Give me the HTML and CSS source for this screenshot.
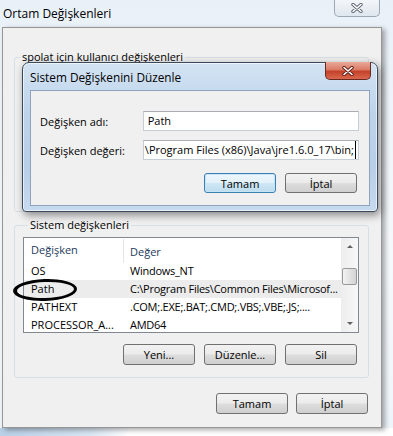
FILE: index.html
```html
<!DOCTYPE html>
<html lang="tr">
<head>
  <meta charset="UTF-8" />
  <title>Ortam Değişkenleri</title>
  <link rel="stylesheet" href="styles.css">
</head>
<body>
  <div class="window">
    <div class="titlebar">
      <span class="title">Ortam Değişkenleri</span>
      <div class="close-outer">
        <svg width="12" height="10" viewBox="0 0 12 10"><path d="M2 1.5 L10 8.5 M10 1.5 L2 8.5" stroke="#5d6672" stroke-width="3.4" stroke-linecap="round"/><path d="M2 1.5 L10 8.5 M10 1.5 L2 8.5" stroke="#fff" stroke-width="1.6" stroke-linecap="round"/></svg>
      </div>
    </div>

    <div class="client">
      <fieldset class="group group-user">
        <legend>spolat için kullanıcı değişkenleri</legend>
      </fieldset>

      <fieldset class="group group-system">
        <legend>Sistem değişkenleri</legend>
        <div class="listview">
          <div class="lv-table">
            <div class="lv-header">
              <span class="col-name">Değişken</span>
              <span class="col-value">Değer</span>
            </div>
            <div class="lv-row"><span class="col-name">OS</span><span class="col-value">Windows_NT</span></div>
            <div class="lv-row selected"><span class="col-name">Path</span><span class="col-value">C:\Program Files\Common Files\Microsof...</span></div>
            <div class="lv-row"><span class="col-name">PATHEXT</span><span class="col-value">.COM;.EXE;.BAT;.CMD;.VBS;.VBE;.JS;....</span></div>
            <div class="lv-row"><span class="col-name">PROCESSOR_A...</span><span class="col-value">AMD64</span></div>
          </div>
          <div class="scrollbar">
            <div class="sb-btn"><span class="arrow-up"></span></div>
            <div class="sb-track"><div class="sb-thumb"></div></div>
            <div class="sb-btn"><span class="arrow-down"></span></div>
          </div>
        </div>
        <div class="btn-row group-buttons">
          <button class="btn">Yeni...</button>
          <button class="btn">Düzenle...</button>
          <button class="btn">Sil</button>
        </div>
      </fieldset>

      <div class="btn-row window-buttons">
        <button class="btn">Tamam</button>
        <button class="btn">İptal</button>
      </div>
    </div>
  </div>

  <!-- edit dialog on top of the main window -->
  <div class="dialog">
    <div class="dialog-title">Sistem Değişkenini Düzenle</div>
    <div class="close-red">
      <svg width="12" height="10" viewBox="0 0 12 10"><path d="M2 1.5 L10 8.5 M10 1.5 L2 8.5" stroke="#5a1d14" stroke-width="3.4" stroke-linecap="round"/><path d="M2 1.5 L10 8.5 M10 1.5 L2 8.5" stroke="#fff" stroke-width="1.6" stroke-linecap="round"/></svg>
    </div>
    <div class="dialog-client">
      <div class="field">
        <label>Değişken adı:</label>
        <div class="input">Path</div>
      </div>
      <div class="field">
        <label>Değişken değeri:</label>
        <div class="input scrolled"><span class="caret">\Program Files (x86)\Java\jre1.6.0_17\bin;</span></div>
      </div>
      <div class="btn-row dialog-buttons">
        <button class="btn default">Tamam</button>
        <button class="btn">İptal</button>
      </div>
    </div>
  </div>

  <div class="mark"></div>
</body>
</html>
```

FILE: styles.css
```css
body {
  margin: 0;
  width: 393px;
  height: 436px;
  overflow: hidden;
  position: relative;
  font-family: "Open Sans", sans-serif;
  font-size: 11px;
  color: #000;
  background:
    linear-gradient(90deg, #b9cfe6 0px, #d8e6f3 90px, #fff 130px) bottom / 100% 8px no-repeat,
    linear-gradient(180deg, #e9f1f8, #f6f9fc 60%, #eef5fa);
}

.window { display: flex; flex-direction: column; }
.titlebar {
  height: 27px;
  display: flex;
  justify-content: space-between;
  align-items: flex-start;
}
.title { padding: 6px 0 0 3px; font-size: 12px; line-height: 16px; }
.close-outer {
  width: 46px; height: 17px;
  margin-right: 13px;
  box-sizing: border-box;
  border: 1px solid #9ca7b4;
  border-top: 0;
  border-radius: 0 0 5px 5px;
  background: linear-gradient(#f3f6f9, #dfe6ee);
  display: flex;
  align-items: center;
  justify-content: center;
}

.client {
  margin-left: 2px;
  width: 380px; height: 401px;
  box-sizing: border-box;
  border: 1px solid #969696;
  background: #f0f0f0;
  box-shadow: 3px 2px 5px rgba(0,0,0,0.35);
  display: flex;
  flex-direction: column;
}

.group {
  margin: 0 12px 0 11px;
  padding: 0;
  min-width: 0;
  box-sizing: border-box;
  border: 1px solid #d5dfe5;
  border-radius: 3px;
}
.group legend { margin-left: 5px; padding: 0 2px; line-height: 14px; }
.group-user { margin-top: 22px; height: 162px; }
.group-system { margin-top: 6px; height: 160px; padding: 5px 9px 0 8px; }

.listview {
  height: 96px;
  box-sizing: border-box;
  border: 1px solid #828790;
  background: #fff;
  display: flex;
}
.lv-table { flex: 1; min-width: 0; overflow: hidden; }
.lv-header { height: 24px; display: flex; align-items: center; padding-top: 2px; box-sizing: border-box; }
.lv-header .col-name { border-right: 1px solid #e5e5e5; height: 24px; line-height: 22px; color: #1e3a5c; }
.lv-header .col-value { color: #1e3a5c; }
.lv-row { height: 18px; line-height: 14px; display: flex; align-items: center; white-space: nowrap; }
.lv-row.selected { background: #ececec; }
.lv-row .col-value { letter-spacing: -0.25px; }
.col-name { width: 100px; flex-shrink: 0; padding-left: 7px; box-sizing: border-box; }
.col-value { padding-left: 6px; }

.scrollbar {
  width: 17px;
  flex-shrink: 0;
  display: flex;
  flex-direction: column;
  background: linear-gradient(90deg, #ededed, #f8f8f8);
}
.sb-btn { height: 17px; display: flex; align-items: center; justify-content: center; }
.sb-track { flex: 1; }
.sb-thumb {
  margin: 13px 1px 0 1px;
  height: 17px;
  box-sizing: border-box;
  border: 1px solid #989898;
  border-radius: 2px;
  background: linear-gradient(90deg, #f3f3f3, #e2e2e2 50%, #d4d4d4);
}
.arrow-up, .arrow-down { width: 0; height: 0; border-left: 3px solid transparent; border-right: 3px solid transparent; }
.arrow-up { border-bottom: 3px solid #606060; }
.arrow-down { border-top: 3px solid #606060; }

.btn-row { display: flex; justify-content: flex-end; }
.group-buttons { margin: 11px 2px 0 0; gap: 9px; }
.window-buttons { margin: 15px 13px 0 0; gap: 8px; }

.btn {
  width: 72px; height: 21px;
  padding: 0;
  font: inherit;
  color: #000;
  border: 1px solid #707070;
  border-radius: 3px;
  background: linear-gradient(#f2f2f2 0%, #ebebeb 48%, #dddddd 52%, #cfcfcf 100%);
}
.btn.default {
  border-color: #3c7fb1;
  background: linear-gradient(#eef7fc 0%, #e2f1fa 48%, #cfe7f5 52%, #bcdcee 100%);
  box-shadow: inset 0 0 0 1px #c6e4f6;
}

.dialog {
  position: absolute;
  left: 22px; top: 62px;
  width: 356px; height: 150px;
  box-sizing: border-box;
  border: 1px solid #3a4a5e;
  border-radius: 7px 7px 4px 4px;
  background: linear-gradient(180deg, #d3e3f3 0%, #bcd3ea 35%, #b8cfe8 70%, #c6d9ee 100%);
  box-shadow: 0 0 0 1px rgba(255,255,255,0.6) inset, 2px 3px 8px rgba(0,0,0,0.45);
  padding: 0 7px 5px 7px;
  display: flex;
  flex-direction: column;
}
.dialog-title { height: 27px; line-height: 28px; font-size: 11.8px; }
.close-red {
  position: absolute;
  top: -1px; right: 6px;
  width: 46px; height: 18px;
  box-sizing: border-box;
  border: 1px solid #6a2a20;
  border-top: 0;
  border-radius: 0 0 5px 5px;
  background: linear-gradient(#eaa999 0%, #d97b66 45%, #c5412b 55%, #d9674d 100%);
  display: flex;
  align-items: center;
  justify-content: center;
}
.dialog-client {
  flex: 1;
  border: 1px solid #8ea4bd;
  background: #f0f0f0;
  padding: 20px 10px 0 9px;
}
.field { display: flex; align-items: center; }
.field + .field { margin-top: 9px; }
.field label { width: 103px; }
.input {
  width: 217px; height: 20px;
  box-sizing: border-box;
  border: 1px solid #c5cdd6;
  border-top-color: #abadb3;
  background: #fff;
  padding: 0 2px 0 4px;
  line-height: 18px;
  white-space: nowrap;
  overflow: hidden;
  display: flex;
}
.input.scrolled { justify-content: flex-end; }
.caret { border-right: 1px solid #000; padding-right: 1px; flex-shrink: 0; }
.dialog-buttons { margin: 13px 2px 0 0; gap: 9px; }
.dialog-buttons .btn { height: 20px; }

.mark {
  position: absolute;
  left: 13px; top: 279px;
  width: 64px; height: 22px;
  box-sizing: border-box;
  border: 3px solid #000;
  border-left-width: 4px;
  border-radius: 50%;
  transform: rotate(-2deg);
}
```
